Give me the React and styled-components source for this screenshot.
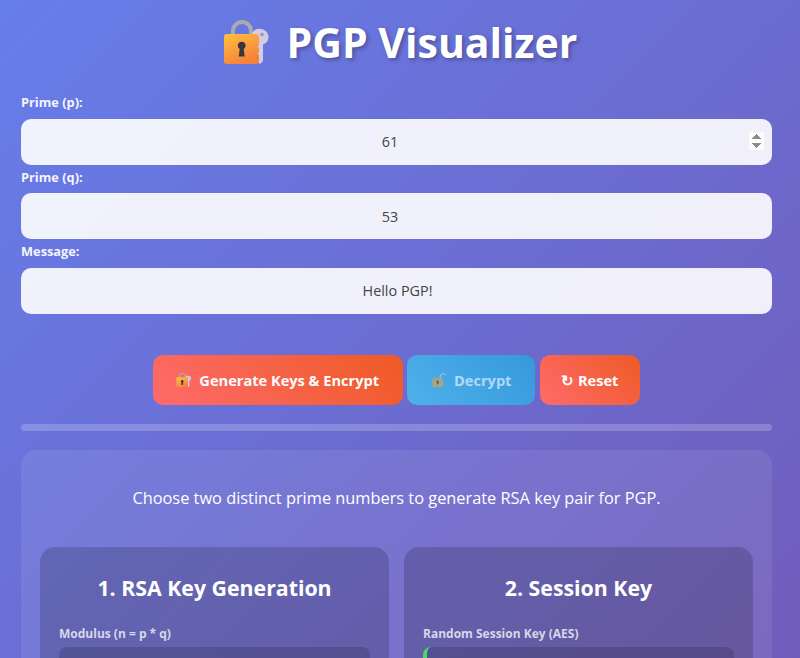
import styled, { createGlobalStyle } from 'styled-components'

const GlobalStyle = createGlobalStyle`
  html, body {
    margin: 0;
    padding: 0;
    height: 658px;
    overflow: hidden;
  }
  * {
    box-sizing: border-box;
  }
  body {
    font-family: "Open Sans", "Noto Sans", "Liberation Sans", sans-serif;
  }
`

const Page = styled.div`
  height: 658px;
  overflow: hidden;
  padding: 0 28px 0 21px;
  background: linear-gradient(135deg, #667eea 0%, #764ba2 100%) 0 0 / 100% 1400px no-repeat;
`

const Title = styled.h1`
  margin: 0 -7px 0 0;
  height: 90px;
  padding-bottom: 7px;
  display: flex;
  align-items: center;
  justify-content: center;
  gap: 16px;
  font-size: 41px;
  font-weight: 700;
  color: #fff;
  text-shadow: 2px 2px 4px rgba(0, 0, 0, 0.3);
`

const Field = styled.div`
  display: flex;
  flex-direction: column;
`

const Label = styled.label`
  height: 28.5px;
  padding-bottom: 8.5px;
  display: flex;
  align-items: flex-end;
  font-size: 12.8px;
  line-height: 16px;
  font-weight: 700;
  color: #f4f4ff;
`

const Input = styled.input`
  width: 100%;
  height: 46px;
  padding: 0 8px 0 10px;
  border: 0;
  border-radius: 10px;
  outline: none;
  text-align: center;
  font-family: inherit;
  font-size: 14.4px;
  color: #444;
  background: rgba(255, 255, 255, 0.9);
  &::-webkit-inner-spin-button,
  &::-webkit-outer-spin-button {
    opacity: ${(props) => (props.$spin ? 1 : 0)};
  }
`

const ButtonRow = styled.div`
  display: flex;
  justify-content: center;
  gap: 4.5px;
  margin: 41px 0 0 -0.5px;
`

const Button = styled.button`
  height: 50px;
  width: ${(props) => props.$w}px;
  display: flex;
  align-items: center;
  justify-content: center;
  gap: 7px;
  border: 0;
  border-radius: 10px;
  font-family: inherit;
  font-size: 14.6px;
  font-weight: 700;
  color: #fff;
  background: linear-gradient(45deg, #ff6b6b, #ee5a24);
  &:disabled {
    color: rgba(255, 255, 255, 0.6);
    background: linear-gradient(45deg, #4fb2ec, #3498db);
  }
`

const DimIcon = styled.span`
  display: flex;
  opacity: 0.6;
`

const ProgressTrack = styled.div`
  height: 7px;
  margin-top: 19px;
  border-radius: 4px;
  background: rgba(255, 255, 255, 0.2);
`

const Panel = styled.section`
  margin-top: 19px;
  padding: 0 19px;
  height: 208px;
  overflow: hidden;
  border-radius: 15px 15px 0 0;
  background: rgba(255, 255, 255, 0.08);
`

const Intro = styled.p`
  margin: 0;
  height: 97px;
  display: flex;
  align-items: center;
  justify-content: center;
  font-size: 16.35px;
  color: #fff;
`

const Steps = styled.div`
  display: grid;
  grid-template-columns: 1fr 1fr;
  gap: 15px;
`

const Step = styled.div`
  height: 111px;
  padding: 0 19px;
  overflow: hidden;
  border-radius: 15px 15px 0 0;
  background: rgba(0, 0, 0, 0.17);
`

const StepTitle = styled.h3`
  margin: 0;
  height: 71px;
  padding-top: 10px;
  display: flex;
  align-items: center;
  justify-content: center;
  font-size: 21.3px;
  font-weight: 700;
  color: #fff;
`

const ValueLabel = styled.div`
  height: 29px;
  padding-top: 8px;
  font-size: 12px;
  line-height: 16px;
  font-weight: 700;
  color: rgba(255, 255, 255, 0.75);
`

const ValueBox = styled.div`
  height: 12px;
  border-radius: 8px 8px 0 0;
  background: rgba(0, 0, 0, 0.15);
  border-left: ${(props) => (props.$accent ? '4px solid #4cd964' : '0')};
`

const LockKey = ({ size }) => (
  <svg width={size} height={size} viewBox="0 -2 48 48">
    <defs>
      <linearGradient id="lockBody" x1="0" y1="0" x2="0.5" y2="1">
        <stop offset="0" stopColor="#ffc23d" />
        <stop offset="1" stopColor="#f5813c" />
      </linearGradient>
    </defs>
    <path d="M10 16V9a9 9 0 0 1 18 0v7" fill="none" stroke="#aba9b3" strokeWidth="4" transform="translate(0 2)" />
    <path d="M37.500 9a8 8 0 0 1 2.500 15.600V41l-3 3-3-2V24.600A8 8 0 0 1 37.500 9z" fill="#d2cde2" />
    <circle cx="39" cy="14.500" r="1.700" fill="#9592b0" />
    <path d="M4 14h29c1.500 0 3 1.200 3 3v8l-1.500 1.500L36 28v4l-1.500 1.500L36 35v6c0 2-1.500 3-3 3H4c-2 0-3-1.200-3-3V17c0-1.800 1-3 3-3z" fill="url(#lockBody)" />
    <circle cx="18.700" cy="25.500" r="3.800" fill="#3a3340" />
    <path d="M17 27h3.400l1.300 9.500h-6z" fill="#3a3340" />
  </svg>
)

const OpenLock = ({ size }) => (
  <svg width={size} height={size} viewBox="0 0 48 48">
    <path d="M28 20v-8a8 8 0 0 1 15-3" fill="none" stroke="#c9c4d6" strokeWidth="4" />
    <path d="M7 19h26c2 0 3 1 3 3v20c0 2-1 3-3 3H7c-2 0-3-1-3-3V22c0-2 1-3 3-3z" fill="#f2a03a" />
    <circle cx="20" cy="29" r="3.500" fill="#3a3340" />
    <path d="M18.500 30h3l1 7h-5z" fill="#3a3340" />
  </svg>
)

export default function App() {
  return (
    <>
      <GlobalStyle />
      <Page>
        <Title>
          <LockKey size={48} />
          PGP Visualizer
        </Title>
        <Field>
          <Label>Prime (p):</Label>
          <Input type="number" defaultValue="61" $spin />
        </Field>
        <Field>
          <Label>Prime (q):</Label>
          <Input type="number" defaultValue="53" />
        </Field>
        <Field>
          <Label>Message:</Label>
          <Input type="text" defaultValue="Hello PGP!" />
        </Field>
        <ButtonRow>
          <Button $w={250}>
            <LockKey size={16} />
            Generate Keys &amp; Encrypt
          </Button>
          <Button $w={128} disabled>
            <DimIcon>
              <OpenLock size={16} />
            </DimIcon>
            Decrypt
          </Button>
          <Button $w={100}>↻ Reset</Button>
        </ButtonRow>
        <ProgressTrack />
        <Panel>
          <Intro>Choose two distinct prime numbers to generate RSA key pair for PGP.</Intro>
          <Steps>
            <Step>
              <StepTitle>1. RSA Key Generation</StepTitle>
              <ValueLabel>Modulus (n = p * q)</ValueLabel>
              <ValueBox />
            </Step>
            <Step>
              <StepTitle>2. Session Key</StepTitle>
              <ValueLabel>Random Session Key (AES)</ValueLabel>
              <ValueBox $accent />
            </Step>
          </Steps>
        </Panel>
      </Page>
    </>
  )
}
